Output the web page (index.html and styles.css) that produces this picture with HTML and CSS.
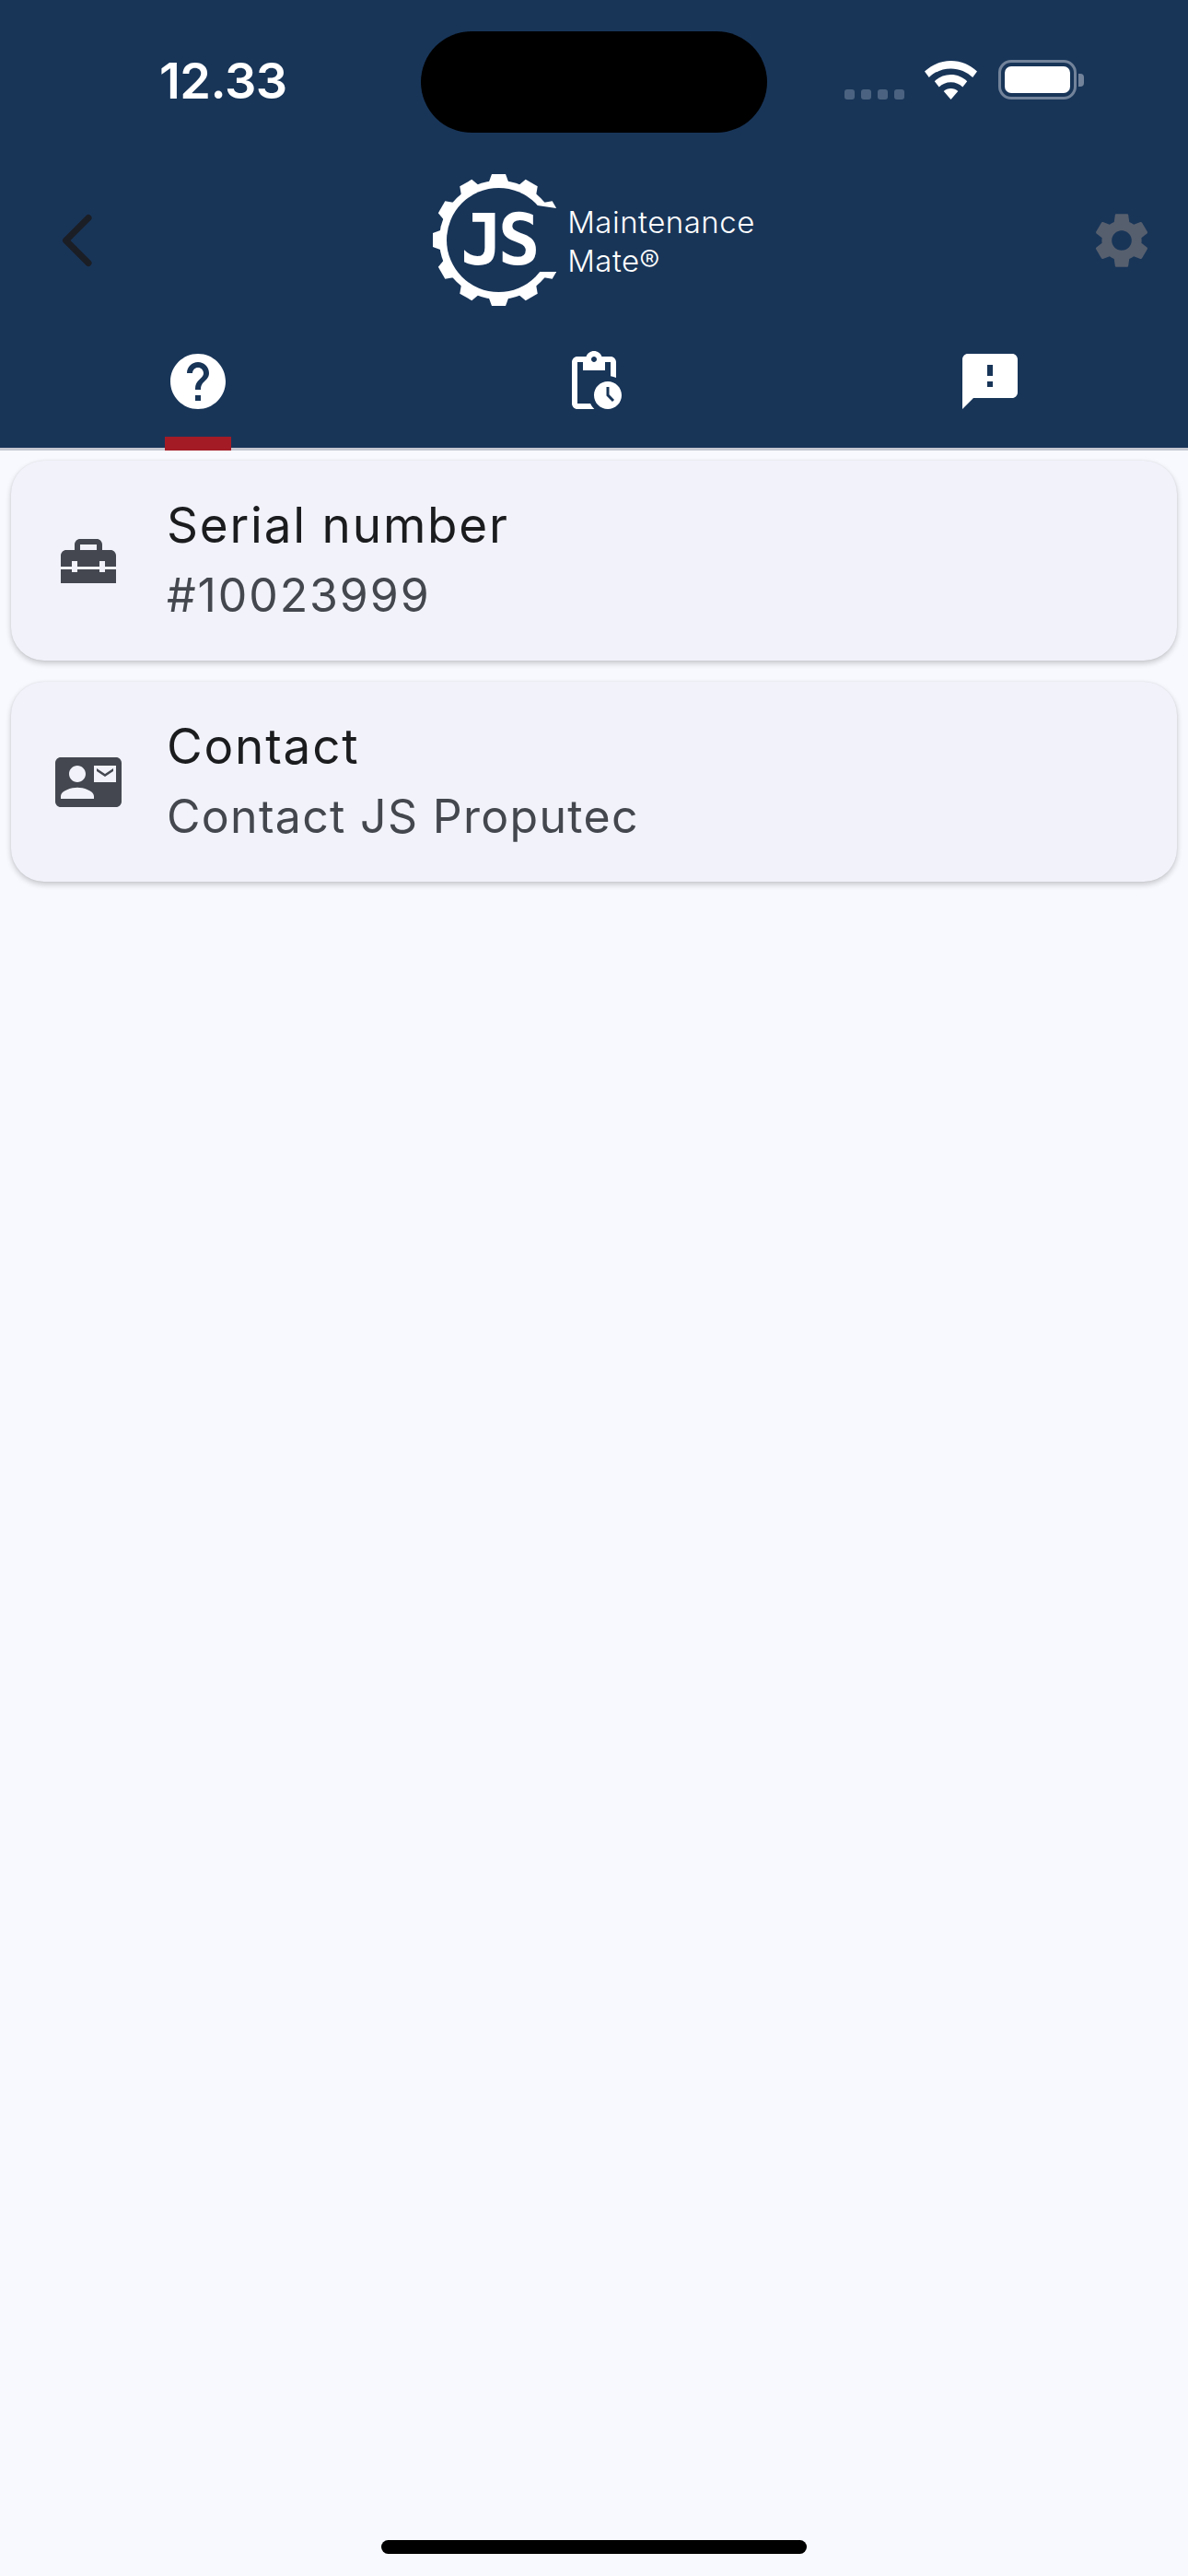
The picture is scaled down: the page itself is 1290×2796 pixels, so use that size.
FILE: index.html
```html
<!DOCTYPE html>
<html lang="en">
<head>
<meta charset="utf-8">
<title>Maintenance Mate</title>
<link rel="stylesheet" href="styles.css">
</head>
<body>
<div class="screen">
  <header class="header">
    <div class="island"></div>
    <div class="status">
      <span class="time">12.33</span>
      <div class="status-right">
        <div class="dots"><i></i><i></i><i></i><i></i></div>
        <svg class="wifi" viewBox="0 0 57 42"><path fill="#fff" d="M28.5 0C39.5 0 49.5 4.3 57 11.5L52.2 18C46 12 37.7 8.4 28.5 8.4S11 12 4.8 18L0 11.5C7.5 4.3 17.5 0 28.5 0Z"/><path fill="#fff" d="M28.5 15C35.300 15 41.500 17.700 46.200 22.200L41.300 28.500C38 25.300 33.500 23.300 28.500 23.300S19 25.300 15.700 28.500L10.800 22.200C15.500 17.700 21.700 15 28.500 15Z"/><path fill="#fff" d="M28.500 30C31.500 30 34.300 31.200 36.300 33.100L28.500 42L20.700 33.100C22.700 31.200 25.500 30 28.500 30Z"/></svg>
        <div class="battery"><div class="battery-body"><div class="battery-level"></div></div><div class="battery-cap"></div></div>
      </div>
    </div>
    <div class="appbar">
      <svg class="back" viewBox="0 0 36 58"><path d="M30 4.500 5.500 29 30 53.500" fill="none" stroke="#1b1e25" stroke-width="7" stroke-linecap="round" stroke-linejoin="round"/></svg>
      <div class="logo">
        <svg class="logo-mark" viewBox="0 0 134 144">
          <defs>
            <mask id="ring">
              <rect width="134" height="144" fill="#000"/>
              <g fill="#fff" transform="translate(71.500 71.500)">
                <circle r="64.500"/>
                <polygon points="-11,-62 -7.500,-71.500 7.500,-71.500 11,-62"/>
                <polygon points="-11,-62 -7.500,-71.500 7.500,-71.500 11,-62" transform="rotate(30)"/>
                <polygon points="-11,-62 -7.500,-71.500 7.500,-71.500 11,-62" transform="rotate(60)"/>
                <polygon points="-11,-62 -7.500,-71.500 7.500,-71.500 11,-62" transform="rotate(120)"/>
                <polygon points="-11,-62 -7.500,-71.500 7.500,-71.500 11,-62" transform="rotate(150)"/>
                <polygon points="-11,-62 -7.500,-71.500 7.500,-71.500 11,-62" transform="rotate(180)"/>
                <polygon points="-11,-62 -7.500,-71.500 7.500,-71.500 11,-62" transform="rotate(210)"/>
                <polygon points="-11,-62 -7.500,-71.500 7.500,-71.500 11,-62" transform="rotate(240)"/>
                <polygon points="-11,-62 -7.500,-71.500 7.500,-71.500 11,-62" transform="rotate(270)"/>
                <polygon points="-11,-62 -7.500,-71.500 7.500,-71.500 11,-62" transform="rotate(300)"/>
                <polygon points="-11,-62 -7.500,-71.500 7.500,-71.500 11,-62" transform="rotate(330)"/>
              </g>
              <circle cx="71.500" cy="71.500" r="56.500" fill="#000"/>
              <polygon points="100,32 134,37 134,106 100,106" fill="#000"/>
            </mask>
          </defs>
          <rect width="134" height="144" fill="#fff" mask="url(#ring)"/>
          <text class="logo-js" x="30" y="98">JS</text>
        </svg>
        <div class="logo-name"><span>Maintenance</span><span>Mate®</span></div>
      </div>
      <svg class="settings" viewBox="0 0 24 24"><path d="M19.14 12.94c.04-.3.06-.61.06-.94 0-.32-.02-.64-.07-.94l2.03-1.58c.18-.14.23-.41.12-.61l-1.92-3.32c-.12-.22-.37-.29-.59-.22l-2.39.96c-.5-.38-1.03-.7-1.62-.94l-.36-2.54c-.04-.24-.24-.41-.48-.41h-3.84c-.24 0-.43.17-.47.41l-.36 2.54c-.59.24-1.13.57-1.62.94l-2.39-.96c-.22-.08-.47 0-.59.22L2.74 8.87c-.12.21-.08.47.12.61l2.03 1.58c-.05.3-.09.63-.09.94s.02.64.07.94l-2.03 1.58c-.18.14-.23.41-.12.61l1.92 3.32c.12.22.37.29.59.22l2.39-.96c.5.38 1.03.7 1.62.94l.36 2.54c.05.24.24.41.48.41h3.84c.24 0 .44-.17.47-.41l.36-2.54c.59-.24 1.13-.56 1.62-.94l2.39.96c.22.08.47 0 .59-.22l1.92-3.32c.12-.22.07-.47-.12-.61l-2.01-1.58zM12 15.6c-1.98 0-3.6-1.62-3.6-3.6s1.62-3.6 3.6-3.6 3.6 1.62 3.6 3.6-1.62 3.6-3.6 3.6z"/></svg>
    </div>
    <nav class="tabs">
      <div class="tab tab-active"><svg class="tab-icon" viewBox="0 0 24 24"><path d="M12 2C6.48 2 2 6.48 2 12s4.48 10 10 10 10-4.48 10-10S17.52 2 12 2zm1 17h-2v-2h2v2zm2.07-7.75l-.9.92C13.45 12.9 13 13.5 13 15h-2v-.5c0-1.1.45-2.1 1.17-2.83l1.24-1.26c.37-.36.59-.86.59-1.41 0-1.1-.9-2-2-2s-2 .9-2 2H8c0-2.21 1.79-4 4-4s4 1.79 4 4c0 .88-.36 1.68-.93 2.25z"/></svg></div>
      <div class="tab"><svg class="tab-icon" viewBox="0 0 24 24"><path d="M17 12c-2.76 0-5 2.24-5 5s2.24 5 5 5 5-2.24 5-5-2.24-5-5-5zm1.65 7.35L16.5 17.2V14h1v2.79l1.85 1.85-.7.71zM18 3h-3.18C14.4 1.84 13.3 1 12 1s-2.4.84-2.82 2H6c-1.1 0-2 .9-2 2v15c0 1.1.9 2 2 2h6.11c-.59-.57-1.07-1.25-1.42-2H6V5h2v3h8V5h2v5.08c.71.1 1.38.31 2 .6V5c0-1.1-.9-2-2-2zm-6 2c-.55 0-1-.45-1-1s.45-1 1-1 1 .45 1 1-.45 1-1 1z"/></svg></div>
      <div class="tab"><svg class="tab-icon" viewBox="0 0 24 24"><path d="M20 2H4c-1.1 0-1.99.9-1.99 2L2 22l4-4h14c1.1 0 2-.9 2-2V4c0-1.1-.9-2-2-2zm-7 12h-2v-2h2v2zm0-4h-2V6h2v4z"/></svg></div>
    </nav>
  </header>
  <main class="list">
    <section class="card">
      <svg class="card-icon" viewBox="0 0 24 24"><path d="M18 16h-2v-1H8v1H6v-1H2v5h20v-5h-4zm2-8h-3V6c0-1.1-.9-2-2-2H9c-1.1 0-2 .9-2 2v2H4c-1.1 0-2 .9-2 2v4h4v-2h2v2h8v-2h2v2h4v-4c0-1.1-.9-2-2-2zm-5 0H9V6h6v2z"/></svg>
      <div class="card-text"><div class="card-title">Serial number</div><div class="card-sub card-num">#10023999</div></div>
    </section>
    <section class="card">
      <svg class="card-icon" viewBox="0 0 24 24"><path d="M21 8V7l-3 2-3-2v1l3 2 3-2zm1-5H2C.9 3 0 3.9 0 5v14c0 1.1.9 2 2 2h20c1.1 0 1.99-.9 1.99-2L24 5c0-1.1-.9-2-2-2zM8 6c1.66 0 3 1.34 3 3s-1.34 3-3 3-3-1.34-3-3 1.34-3 3-3zm6 12H2v-1c0-2 4-3.1 6-3.1s6 1.1 6 3.1v1zm8-6h-8V6h8v6z"/></svg>
      <div class="card-text"><div class="card-title">Contact</div><div class="card-sub">Contact JS Proputec</div></div>
    </section>
  </main>
  <div class="home-bar"></div>
</div>
</body>
</html>
```
FILE: styles.css
```css
* { box-sizing: border-box; }
html, body { margin: 0; padding: 0; }
body { width: 1290px; height: 2796px; overflow: hidden; background: #f8f9fe; font-family: "Inter", "Liberation Sans", sans-serif; }
.screen { position: relative; width: 1290px; height: 2796px; background: #f8f9fe; overflow: hidden; }

.header { position: relative; height: 489px; background: #183558; border-bottom: 3px solid #c5c7d0; }
.island { position: absolute; left: 457px; top: 34px; width: 376px; height: 110px; border-radius: 55px; background: #000; }

.status { height: 176px; padding: 0 113px 0 173px; display: flex; justify-content: space-between; align-items: flex-start; }
.time { margin-top: 55px; color: #fff; font-size: 54px; line-height: 65px; font-weight: 600; letter-spacing: -.5px; }
.status-right { margin-top: 65px; display: flex; align-items: flex-end; }
.dots { display: flex; gap: 7px; margin-right: 22px; }
.dots i { width: 11px; height: 11px; border-radius: 3px; background: #4b6380; }
.wifi { width: 57px; height: 42px; display: block; margin-right: 23px; }
.battery { display: flex; align-items: center; gap: 2px; }
.battery-body { width: 85px; height: 43px; padding: 4px; border: 3px solid #72839a; border-radius: 14px; }
.battery-level { width: 100%; height: 100%; background: #fff; border-radius: 7px; }
.battery-cap { width: 6px; height: 14px; background: #72839a; border-radius: 0 4px 4px 0; }

.appbar { height: 154px; padding: 0 36px 0 66px; display: flex; align-items: flex-start; justify-content: space-between; position: relative; }
.back { width: 36px; height: 58px; margin-top: 56px; }
.logo { display: flex; align-items: flex-start; padding-top: 13px; margin-left: 6px; }
.logo-mark { width: 134px; height: 144px; display: block; }
.logo-js { font-family: "DejaVu Sans Mono", monospace; font-weight: 700; font-size: 76px; letter-spacing: -5px; fill: #fff; }
.logo-name { display: flex; flex-direction: column; margin-left: 12px; margin-top: 32px; color: #fff; font-size: 33px; line-height: 41.500px; font-weight: 300; letter-spacing: .5px; }
.settings { width: 72px; height: 72px; margin-top: 49px; fill: #565f6e; }

.tabs { position: absolute; left: 0; right: 0; top: 330px; display: grid; grid-template-columns: repeat(3, 1fr); height: 156px; }
.tab { position: relative; display: flex; justify-content: center; padding-top: 48px; }
.tab-icon { width: 72px; height: 72px; fill: #fff; }
.tab-active::after { content: ""; position: absolute; left: 179px; width: 72px; bottom: -3px; height: 15px; background: #a31b25; }

.list { padding: 11px 12px 0; display: flex; flex-direction: column; gap: 23px; }
.card { height: 217px; padding-left: 48px; display: flex; align-items: center; gap: 49px; background: #f1f2fa; border-radius: 36px; box-shadow: 0 3px 6px rgba(0,0,0,.2), 0 0 2px rgba(0,0,0,.08); }
.card-icon { width: 72px; height: 72px; fill: #44474f; flex: none; }
.card-text { display: flex; flex-direction: column; }
.card-title { font-size: 53px; line-height: 75px; color: #1a1c1e; letter-spacing: 1.800px; }
.card-sub { font-size: 50px; line-height: 75px; margin-top: 1px; color: #44474e; letter-spacing: 1.300px; }
.card-num { letter-spacing: 1.900px; }

.home-bar { position: absolute; left: 414px; top: 2757px; width: 462px; height: 15px; border-radius: 8px; background: #000; }
```
